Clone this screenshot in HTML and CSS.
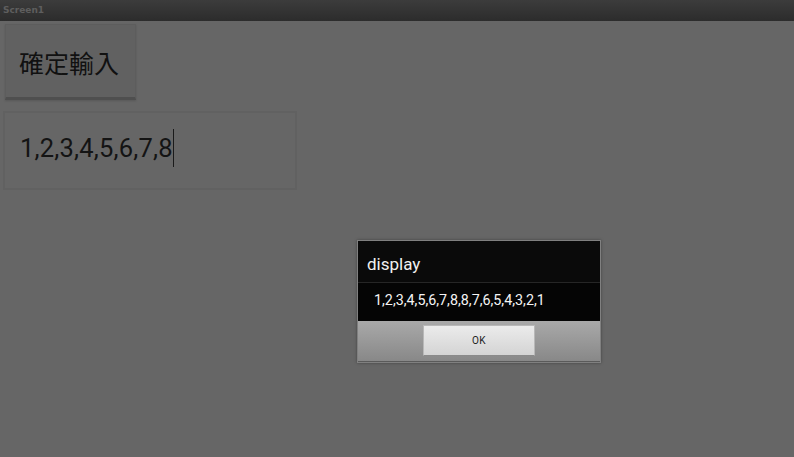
FILE: index.html
```html
<!DOCTYPE html>
<html>
<head>
<meta charset="utf-8">
<link rel="stylesheet" href="styles.css">
</head>
<body>
<div class="titlebar">Screen1</div>
<div class="content">
  <div class="btn">確定輸入</div>
  <div class="field"><span class="val">1,2,3,4,5,6,7,8</span><span class="cursor"></span></div>
</div>
<div class="dialog">
  <div class="dtitle">display</div>
  <div class="dmsg">1,2,3,4,5,6,7,8,8,7,6,5,4,3,2,1</div>
  <div class="dbar"><div class="ok">OK</div></div>
</div>
</body>
</html>
```
FILE: styles.css
```css
html, body { margin: 0; padding: 0; }
body {
  width: 794px; height: 457px; overflow: hidden;
  background: #666666;
  font-family: Roboto, "Noto Sans CJK TC", sans-serif;
  position: relative;
}
.titlebar {
  height: 21px;
  background: linear-gradient(#3c3c3c, #2c2c2c);
  color: #5e5e5e;
  font-family: "DejaVu Sans", sans-serif;
  font-weight: bold;
  font-size: 9px;
  line-height: 20px;
  padding-left: 3px;
  box-sizing: border-box;
}
.content { padding: 3px 0 0 3px; display: flex; flex-direction: column; align-items: flex-start; }
.btn {
  margin-left: 2px;
  width: 131px; height: 76px;
  box-sizing: border-box;
  background: #616161;
  border: 1px solid #5d5d5d;
  border-bottom: 3px solid #4f4f4f;
  box-shadow: 0 1px 2px rgba(0,0,0,0.15);
  display: flex; align-items: center; justify-content: center;
  font-family: "Noto Sans CJK TC", sans-serif;
  font-size: 25px; color: #111;
  padding-top: 1px;
  padding-right: 3px;
}
.field {
  margin-top: 11px;
  width: 294px; height: 79px;
  box-sizing: border-box;
  border: 2px solid #616161;
  background: #666;
  display: flex; align-items: center;
  padding-left: 15px;
  padding-bottom: 6px;
}
.val { font-size: 25.5px; color: #141414; letter-spacing: 0.2px; }
.cursor { width: 1px; height: 38px; background: #1a1a1a; margin-left: 0px; }
.dialog {
  position: absolute; left: 357px; top: 240px;
  width: 244px; height: 123px;
  box-sizing: border-box;
  border: 1px solid #808080;
  box-shadow: 0 0 3px rgba(0,0,0,0.35);
  display: flex; flex-direction: column;
}
.dtitle {
  height: 41px; background: #0a0a0a;
  color: #f0f0f0; font-size: 17px;
  line-height: 46px; padding-left: 9px;
  border-bottom: 1px solid #262626;
}
.dmsg {
  height: 38px; background: #050505;
  color: #f4f4f4; font-size: 14.3px;
  line-height: 34px; padding-left: 16px;
}
.dbar {
  flex: 1;
  background: linear-gradient(#a9a9a9, #888888);
  display: flex; justify-content: center; padding-top: 4px;
  box-sizing: border-box;
  border-bottom: 1px solid #5a5a5a;
}
.ok {
  width: 112px; height: 31px;
  box-sizing: border-box;
  background: linear-gradient(#ebebeb, #d4d4d4);
  border: 1px solid #b8b8b8;
  border-bottom-color: #8a8a8a;
  color: #222; font-size: 10px;
  display: flex; align-items: center; justify-content: center;
  letter-spacing: 0.5px;
}
```
